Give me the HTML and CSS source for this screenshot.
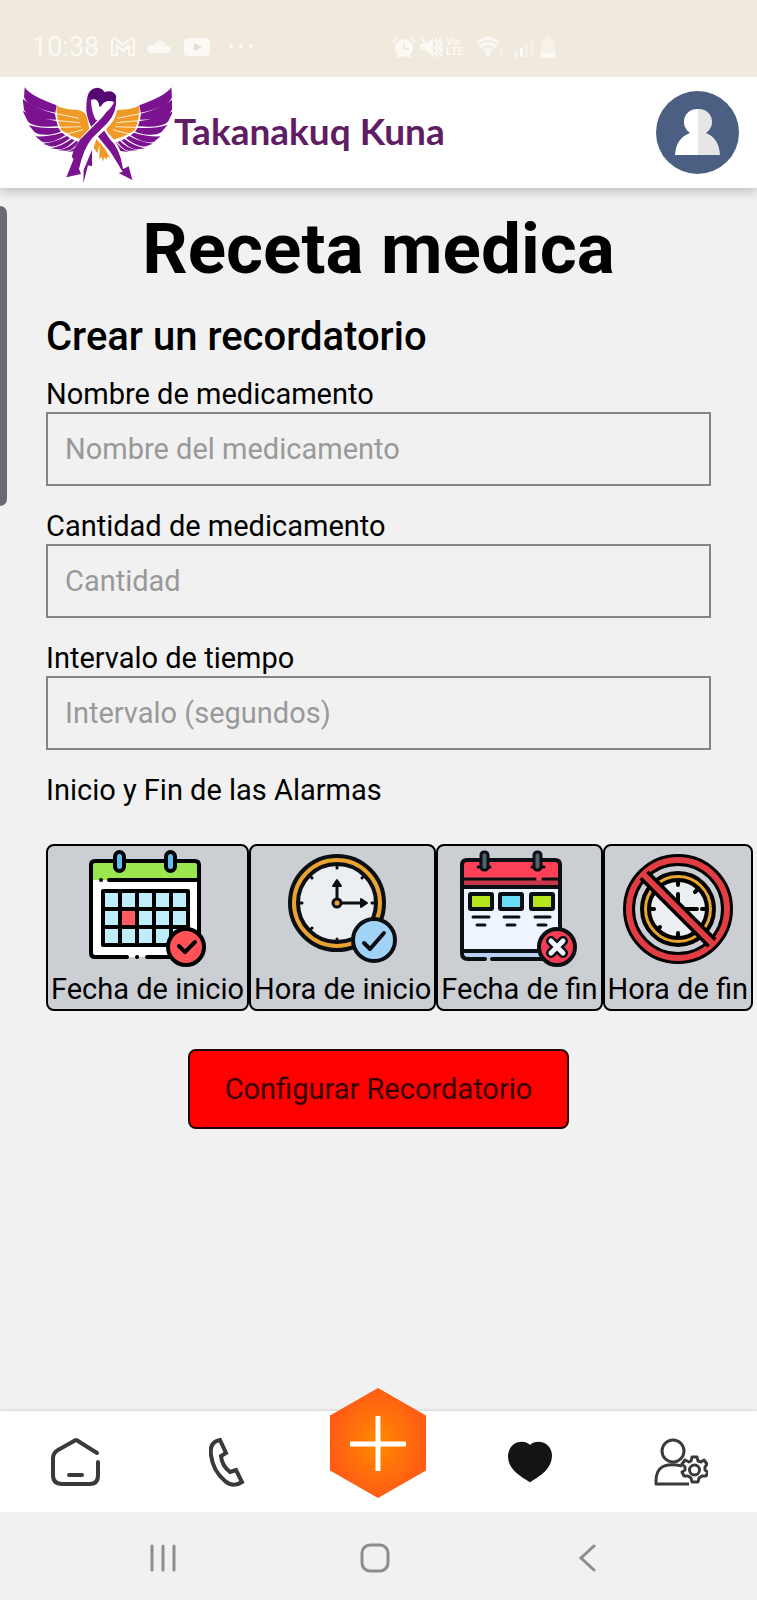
FILE: index.html
```html
<!DOCTYPE html>
<html lang="es">
<head>
<meta charset="utf-8">
<meta name="viewport" content="width=device-width, initial-scale=1">
<title>Receta medica</title>
<link rel="stylesheet" href="styles.css">
</head>
<body>
<div class="status">
  <div class="status-left">
    <span class="clock">10:38</span>
    <svg width="24" height="20" viewBox="0 0 24 20" fill="none" stroke="currentColor" stroke-width="2"><path d="M1 18V3q2-3 4-1l7 6 7-6q2-2 4 1v15h-5V9l-6 5-6-5v9z"/></svg>
    <svg width="25" height="20" viewBox="0 0 25 20" fill="currentColor"><path d="M4 16a4 4 0 0 1 0-8q2 0 3 1 2-6 7-5 4 1 5 5 5 0 5 4 0 3-3 3z"/></svg>
    <svg width="26" height="20" viewBox="0 0 26 20"><rect y="1" width="26" height="18" rx="4" fill="currentColor"/><path d="M10 6l8 4-8 4z" fill="#e8e0d5"/></svg>
    <svg class="more" width="26" height="20" viewBox="0 0 26 20" fill="currentColor"><circle cx="3" cy="9" r="2"/><circle cx="13" cy="9" r="2"/><circle cx="23" cy="9" r="2"/></svg>
  </div>
  <div class="status-right">
    <svg width="24" height="24" viewBox="0 0 24 24"><g fill="none" stroke="currentColor" stroke-width="2"><path d="M1 7l5-5M23 7l-5-5M5 23l3-4M19 23l-3-4"/></g><circle cx="12" cy="13" r="9" fill="currentColor"/><path d="M12 8v6h5" fill="none" stroke="#f0e9de" stroke-width="2"/></svg>
    <svg width="24" height="24" viewBox="0 0 24 24"><path d="M1 9h5l8-6v18l-8-6H1z" fill="currentColor"/><path d="M2 2l13 20M18 3l-2 3 3 3-3 3 3 3-3 3 3 3M22 3l-2 3 3 3-3 3 3 3-3 3 3 3" fill="none" stroke="currentColor" stroke-width="2"/></svg>
    <span class="volte">Vo<br>LTE</span>
    <svg class="wifi" width="28" height="22" viewBox="0 0 28 22" fill="none" stroke="currentColor" stroke-width="3"><path d="M2 7q11-9 22 0M5 11q8-7 16 0M9 15q4-4 8 0"/><circle cx="13" cy="18" r="1" /><path d="M26 14v6" stroke-width="1"/></svg>
    <svg width="22" height="22" viewBox="0 0 22 22" fill="currentColor"><path d="M1 17h3v4H1zM6 12h3v9H6z"/><path d="M11 7h3v14h-3zM17 2h3v19h-3z" opacity=".4"/></svg>
    <svg width="18" height="24" viewBox="0 0 18 24" fill="currentColor"><path d="M6 1h6v3h4v15H2V4h4z" opacity=".5"/><path d="M1 18h16v5H1z"/></svg>
  </div>
</div>

<header class="header">
  <a class="brand" href="#">
    <svg width="150" height="99" viewBox="22 18 450 297" aria-hidden="true">
      <defs>
        <g id="wing">
          <g fill="#7b1290">
            <path d="M30 25Q45 50 126 79L122 101Q35 84 28 54Z"/>
            <path d="M24 60Q60 88 121 104L124 122Q40 120 28 92Z"/>
            <path d="M24 96Q70 118 125 126L130 142Q60 148 40 128Z"/>
            <path d="M42 138Q80 150 131 146L139 158Q85 176 60 160Z"/>
            <path d="M62 172Q100 174 142 161L152 169Q108 197 82 188Z"/>
            <path d="M85 194Q125 188 157 171L166 178Q128 207 106 202Z"/>
            <path d="M108 208Q145 200 170 180L180 184Q150 215 130 211Z"/>
            <path d="M132 214Q165 207 184 186L192 189Q172 216 155 215Z"/>
            <path d="M158 219Q183 210 195 190L203 194Q198 218 176 217Z"/>
          </g>
          <path fill="#f09a25" d="M126 80Q150 92 185 92Q215 96 217 117L225 152Q214 184 200 181L172 172L140 154Q124 118 126 80Z"/>
          <path fill="none" stroke="#fff" stroke-width="2.500" d="M124 104Q165 112 192 118M126 125Q165 128 195 131M133 145Q170 144 198 143M153 165Q180 160 205 152"/>
        </g>
      </defs>
      <use href="#wing"/>
      <use href="#wing" transform="translate(500 0) scale(-1 1)"/>
      <path fill="#f09a25" d="M245 180l11 13-8 30-11-17zM255 190l16 20 16 28-9-6-1 11-8-8-5 13-3-15-7 8z"/>
      <path fill="#7b1290" d="M232 212v50l-12-3-14 54 1-40z"/>
      <path fill="none" stroke="#fff" stroke-width="32" d="M230 75Q226 118 256 158L290 198Q307 225 317 262"/>
      <path fill="#7b1290" d="M215 95Q214 45 228 35L238 62Q228 92 248 124L285 180Q316 207 325 270L342 262 353 303 312 282 324 278Q298 235 287 218L238 158Q219 128 215 95Z"/>
      <path fill="#fff" d="M309 70Q311 112 286 138L235 187Q210 215 192 272L171 264Q170 210 201 173L260 112Q275 90 273 60Z"/>
      <path fill="#7b1290" d="M304 52Q309 100 278 132L232 178Q206 210 193 270L179 242 171 234Q180 195 207 171L263 115Q285 90 280 65Z"/>
      <path fill="#560872" d="M220 55Q224 27 248 26Q263 27 269 39Q298 30 305 53L298 68Q273 60 262 82L253 84Q253 59 229 63Z"/>
      <path fill="#fff" d="M229 63Q252 54 255 88Q270 57 298 69Q292 90 244 124Q230 100 229 63Z"/>
      <path fill="#7b1290" d="M179 235L155 295 199 285Z"/>
    </svg>
    <span class="brand-name">Takanakuq Kuna</span>
  </a>
  <button class="avatar" aria-label="Perfil">
    <svg width="83" height="83" viewBox="0 0 83 83"><circle cx="41.500" cy="41.500" r="41.500" fill="#4a5f82"/><path fill="#fff" d="M42 18A13 13 0 0 0 34 42Q20 47 19 64H42Z"/><path fill="#e6e6e6" d="M42 18A13 13 0 0 1 50 42Q63 47 64 64H42Z"/></svg>
  </button>
</header>

<div class="edge-handle"></div>

<main class="content">
  <h1>Receta medica</h1>
  <h2>Crear un recordatorio</h2>
  <form class="form">
    <div class="field"><label for="nombre">Nombre de medicamento</label><input id="nombre" type="text" placeholder="Nombre del medicamento"></div>
    <div class="field"><label for="cantidad">Cantidad de medicamento</label><input id="cantidad" type="text" placeholder="Cantidad"></div>
    <div class="field"><label for="intervalo">Intervalo de tiempo</label><input id="intervalo" type="text" placeholder="Intervalo (segundos)"></div>
    <p class="caption">Inicio y Fin de las Alarmas</p>
    <div class="cards">
      <button type="button" class="card">
        <svg width="120" height="120" viewBox="0 0 120 120" stroke="#000" stroke-width="4" stroke-linejoin="round" stroke-linecap="round">
          <rect x="3" y="12" width="108" height="96" rx="4" fill="#fff" stroke="none"/>
          <path d="M5 31V14q0-2 2-2h100q4 0 4 4v15z" fill="#9be64f" stroke="none"/>
          <path d="M39 108H7q-4 0-4-4V16q0-4 4-4h100q4 0 4 4v88q0 4-4 4H59M21 31h90" fill="none"/>
          <path d="M13 31h.1M49 108h.1"/>
          <rect x="27" y="3" width="9" height="19" rx="4.500" fill="#61bdea"/><rect x="78" y="3" width="9" height="19" rx="4.500" fill="#61bdea"/>
          <rect x="15" y="42" width="85" height="54" fill="#bfeefb"/>
          <path d="M32 60h17v18H32z" fill="#ff5b60"/>
          <path d="M32 42v54M49 42v54M66 42v54M83 42v54M15 60h85M15 78h85" fill="none"/>
          <circle cx="98" cy="98" r="18" fill="#ff5358"/><path d="M91 97l6 6 10-10" fill="none"/>
        </svg>
        <span>Fecha de inicio</span>
      </button>
      <button type="button" class="card">
        <svg width="120" height="120" viewBox="0 0 120 120" stroke="#0b0f14" stroke-linejoin="round" stroke-linecap="round">
          <circle cx="54" cy="54" r="47" fill="#e8a42f" stroke-width="4"/><circle cx="54" cy="54" r="39" fill="#ebeff2" stroke-width="4"/>
          <path d="M54 16v3M54 90v3M16 54h3M89 54h3M27 27l2 2M27 81l2-2M81 27l-2 2" fill="none" stroke-width="3"/>
          <path d="M54 49V34M59 54h22" fill="none" stroke-width="3"/><path d="M54 31l-4 6h8zM84 54l-6-4v8z" fill="#0b0f14" stroke-width="2"/>
          <circle cx="54" cy="54" r="4" fill="#e8a42f" stroke-width="3"/>
          <circle cx="91" cy="91" r="21" fill="#a3d2f7" stroke-width="4"/><path d="M81 94l6 6 14-16" fill="none" stroke-width="4"/>
        </svg>
        <span>Hora de inicio</span>
      </button>
      <button type="button" class="card">
        <svg width="120" height="120" viewBox="0 0 120 120" stroke="#0a0f14" stroke-width="4" stroke-linejoin="round" stroke-linecap="round">
          <rect x="3" y="11" width="98" height="98" rx="5" fill="#eef5ff" stroke="none"/>
          <path d="M3 38V16q0-5 5-5h88q5 0 5 5v22z" fill="#ff4158"/><path d="M5 31h94v5H5z" fill="#c53749" stroke="none"/>
          <path d="M5 30h71M84 30h15" fill="none" stroke-width="3"/>
          <path d="M5 102h94v7H7z" fill="#b7d1f3" stroke="none"/>
          <path d="M26 110H9q-6 0-6-6V38M33 110h64q4 0 4-6V38M5 102h92" fill="none"/>
          <g stroke-width="3"><path d="M19 18h12M73 18h12"/><rect x="22" y="3" width="7" height="18" rx="3" fill="#52636d"/><rect x="75" y="3" width="7" height="18" rx="3" fill="#52636d"/></g>
          <rect x="11" y="45" width="22" height="15" rx="1" fill="#b6e51d"/><rect x="41" y="45" width="22" height="15" rx="1" fill="#6bdcf7"/><rect x="72" y="45" width="22" height="15" rx="1" fill="#b6e51d"/>
          <path d="M14 68h16M45 68h15M76 68h15M18 76h8M48 76h8M79 76h8" stroke-width="3"/>
          <circle cx="98" cy="98" r="18" fill="#f73c55"/><path d="M92 92l12 12M104 92L92 104" stroke-width="10"/><path d="M92 92l12 12M104 92L92 104" stroke="#eef5ff" stroke-width="5"/>
        </svg>
        <span>Fecha de fin</span>
      </button>
      <button type="button" class="card">
        <svg width="120" height="120" viewBox="0 0 120 120" fill="none" stroke="#000" stroke-linecap="round">
          <circle cx="60" cy="60" r="49" stroke-width="12"/><circle cx="60" cy="60" r="49" stroke="#e13d42" stroke-width="6"/>
          <circle cx="60" cy="60" r="36" fill="#e9a52c" stroke-width="4"/><circle cx="60" cy="60" r="29" fill="#ebeff2" stroke-width="4"/>
          <path d="M60 33v3M60 84v3M33 60h3M84 60h3M79 41l-2 2M40 80l2-2M60 45v12M60 60h19" stroke-width="4"/>
          <path d="M26 26l68 68" stroke-width="13" stroke-linecap="butt"/><path d="M24 24l72 72" stroke="#e13d42" stroke-width="6" stroke-linecap="butt"/>
        </svg>
        <span>Hora de fin</span>
      </button>
    </div>
    <button type="submit" class="submit">Configurar Recordatorio</button>
  </form>
</main>

<nav class="tabs">
  <a href="#" aria-label="Inicio"><svg width="50" height="50" viewBox="0 0 50 50" fill="none" stroke="#3a3a3a" stroke-width="4" stroke-linecap="round" stroke-linejoin="round"><path d="M46 16L27 4q-2-2-4 0L7 13q-5 3-5 8v17q0 9 9 9h28q8 0 8-9V25M18 38h13"/></svg></a>
  <a href="#" aria-label="Llamar"><svg width="36" height="50" viewBox="0 0 36 50" fill="none" stroke="#3a3a3a" stroke-width="4" stroke-linejoin="miter"><path d="M11 3Q0 5 2 18Q4 34 16 44Q24 51 33 45L27 33L21 35Q13 29 12 19L17 16Z"/></svg></a>
  <a href="#" class="add" aria-label="Agregar"><svg width="96" height="110" viewBox="0 0 96 110"><defs><radialGradient id="glow"><stop offset="0" stop-color="#ff8a00"/><stop offset="1" stop-color="#ff5c14"/></radialGradient></defs><path fill="url(#glow)" d="M48 0L96 27.500V82.500L48 110L0 82.500V27.500Z"/><path d="M48 28v55M20 56h56" stroke="#fff" stroke-width="5"/></svg></a>
  <a href="#" aria-label="Favoritos"><svg width="46" height="42" viewBox="0 0 46 42"><path fill="#141414" d="M23 4C29-2 44 0 45 14C45 28 33 35 25 40Q23 42 21 40C13 35 1 28 1 15C2 0 17-2 23 4Z"/></svg></a>
  <a href="#" aria-label="Cuenta"><svg width="54" height="48" viewBox="0 0 54 48" fill="none" stroke="#3a3a3a" stroke-width="3" stroke-linejoin="round"><circle cx="19" cy="13" r="11"/><path d="M28 28Q2 22 2 43v3h33"/><path fill="#fff" d="M38 19h5l1 4 3 1 3-2 3 4-2 3v3l3 2-2 4h-4l-3 2-1 4h-6l-1-4-3-2h-4l-2-4 3-2v-3l-3-3 3-4 4 2 2-1z"/><circle cx="40.500" cy="32" r="5"/></svg></a>
</nav>
<div class="system">
  <button aria-label="Recientes"><svg width="28" height="30" viewBox="0 0 28 30" stroke="currentColor" stroke-width="3" stroke-linecap="round"><path d="M3 3v24M14 3v24M25 3v24"/></svg></button>
  <button aria-label="Pantalla principal"><svg width="30" height="30" viewBox="0 0 30 30" fill="none" stroke="currentColor" stroke-width="3"><rect x="2" y="2" width="26" height="26" rx="8"/></svg></button>
  <button aria-label="Volver"><svg width="18" height="30" viewBox="0 0 18 30" fill="none" stroke="currentColor" stroke-width="3" stroke-linecap="round"><path d="M16 3L3 15l13 12"/></svg></button>
</div>
</body>
</html>
```
FILE: styles.css
```css
* { box-sizing: border-box; }

body {
  margin: 0;
  min-height: 100vh;
  display: flex;
  flex-direction: column;
  position: relative;
  background: #f1f1f1;
  color: #000;
  font-family: Roboto, "Liberation Sans", sans-serif;
  font-size: 29px;
  line-height: 34px;
}

button {
  margin: 0;
  padding: 0;
  border: 0;
  background: none;
  color: inherit;
  font: inherit;
}

svg { display: block; flex: none; }

.status {
  height: 77px;
  padding: 16px 32px 0;
  display: grid;
  grid-template-columns: 360px 1fr;
  align-items: center;
  background: #f0e9de;
  color: #fcf9f4;
}

.status-left, .status-right { display: flex; align-items: center; }
.status-left { gap: 12px; }
.status-right { gap: 3px; }
.clock { font-size: 27px; }
.more { margin-left: 6px; }
.volte { font-size: 11px; line-height: 10px; font-weight: 700; }
.wifi { margin: 0 8px; }

.header {
  height: 111px;
  padding: 0 18px 0 22px;
  display: flex;
  align-items: center;
  justify-content: space-between;
  background: #fff;
  box-shadow: 0 4px 10px rgba(0, 0, 0, .2);
  clip-path: inset(0 0 -16px 0);
}

.brand {
  display: flex;
  align-items: center;
  gap: 2px;
  color: #5f1d63;
  text-decoration: none;
}

.brand > svg { margin-top: 4px; }

.brand-name {
  font-family: Lato, "Open Sans", sans-serif;
  font-size: 37px;
  font-weight: 700;
  line-height: 48px;
  padding-bottom: 4px;
  white-space: nowrap;
}

.edge-handle {
  position: absolute;
  left: 0;
  top: 206px;
  width: 7px;
  height: 300px;
  border-radius: 0 8px 8px 0;
  background: #6b6977;
}

.content { flex: 1; padding: 19px 46px; }

h1 {
  margin: 0 0 22px;
  font-size: 71px;
  line-height: 84px;
  font-weight: 700;
  text-align: center;
}

h2 {
  margin: 0 0 17px;
  font-size: 40px;
  line-height: 48px;
  font-weight: 500;
}

.form { display: flex; flex-direction: column; gap: 24px; }
.field { display: flex; flex-direction: column; }

.field label, .caption {
  line-height: 32px;
  padding-bottom: 2px;
}

.field input {
  height: 74px;
  padding: 0 17px;
  border: 2px solid #858585;
  border-radius: 0;
  background: transparent;
  color: #000;
  font: inherit;
}

.field input::placeholder { color: #999; opacity: 1; }
.caption { margin: 0 0 12px; }
.cards { display: flex; }

.card {
  flex: none;
  padding: 3px;
  display: flex;
  flex-direction: column;
  align-items: center;
  gap: 3px;
  border: 2px solid #000;
  border-radius: 8px;
  background: #cbced2;
  white-space: nowrap;
}

.submit {
  align-self: center;
  margin-top: 14px;
  padding: 21px 35px;
  border: 2px solid #250000;
  border-radius: 8px;
  background: #f00;
  color: #350000;
}

.tabs {
  height: 101px;
  display: grid;
  grid-template-columns: repeat(5, 1fr);
  background: #fff;
  box-shadow: 0 -1px 2px rgba(0, 0, 0, .12);
}

.tabs a {
  display: flex;
  align-items: center;
  justify-content: center;
}

.tabs .add { margin-top: -38px; }

.system {
  height: 88px;
  padding: 4px 64px 0 57px;
  display: grid;
  grid-template-columns: repeat(3, 1fr);
  color: #8d8d8d;
}

.system button {
  display: flex;
  align-items: center;
  justify-content: center;
}
```
